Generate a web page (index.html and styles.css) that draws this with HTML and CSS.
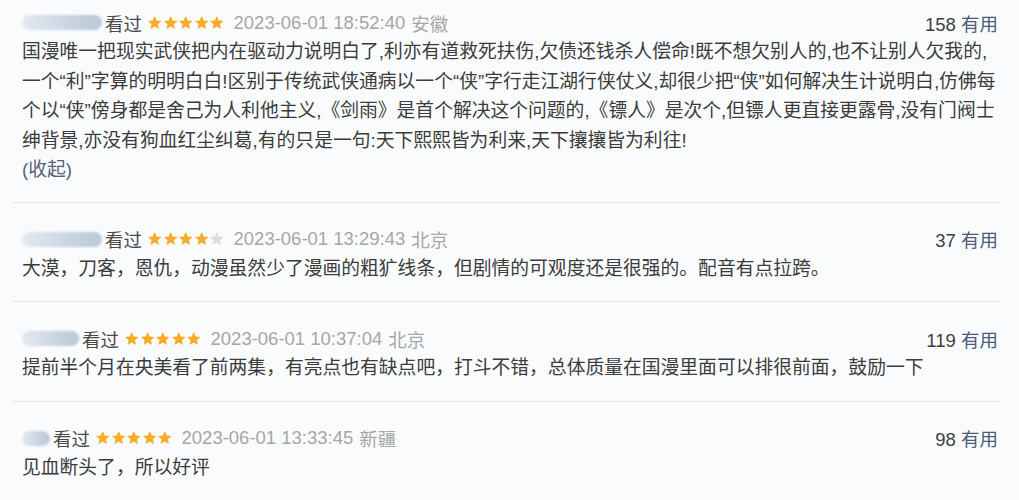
FILE: index.html
```html
<!DOCTYPE html>
<html lang="zh-CN">
<head>
<meta charset="utf-8">
<title>短评</title>
<link rel="stylesheet" href="styles.css">
</head>
<body>
<svg width="0" height="0" class="defs">
  <defs>
    <symbol id="star" viewBox="0 0 24 24">
      <path d="M12 1.6l3.1 6.9 7.4.7-5.6 5 1.7 7.3L12 17.7l-6.6 3.8 1.7-7.3-5.6-5 7.4-.7z"/>
    </symbol>
  </defs>
</svg>
<div class="comments">
  <div class="comment first">
    <div class="head">
      <div class="who">
        <span class="user u80"></span>
        <span class="status">看过</span>
        <span class="stars">
          <svg class="star on"><use href="#star"/></svg><svg class="star on"><use href="#star"/></svg><svg class="star on"><use href="#star"/></svg><svg class="star on"><use href="#star"/></svg><svg class="star on"><use href="#star"/></svg>
        </span>
        <span class="time">2023-06-01 18:52:40</span>
        <span class="loc">安徽</span>
      </div>
      <div class="votes"><span class="num">158</span> <span class="useful">有用</span></div>
    </div>
    <p class="text">国漫唯一把现实武侠把内在驱动力说明白了,利亦有道救死扶伤,欠债还钱杀人偿命!既不想欠别人的,也不让别人欠我的,<br>一个“利”字算的明明白白!区别于传统武侠通病以一个“侠”字行走江湖行侠仗义,却很少把“侠”如何解决生计说明白,仿佛每<br>个以“侠”傍身都是舍己为人利他主义,《剑雨》是首个解决这个问题的,《镖人》是次个,但镖人更直接更露骨,没有门阀士<br>绅背景,亦没有狗血红尘纠葛,有的只是一句:天下熙熙皆为利来,天下攘攘皆为利往!<br><span class="fold">(收起)</span></p>
  </div>

  <div class="comment">
    <div class="head">
      <div class="who">
        <span class="user u80"></span>
        <span class="status">看过</span>
        <span class="stars">
          <svg class="star on"><use href="#star"/></svg><svg class="star on"><use href="#star"/></svg><svg class="star on"><use href="#star"/></svg><svg class="star on"><use href="#star"/></svg><svg class="star off"><use href="#star"/></svg>
        </span>
        <span class="time">2023-06-01 13:29:43</span>
        <span class="loc">北京</span>
      </div>
      <div class="votes"><span class="num">37</span> <span class="useful">有用</span></div>
    </div>
    <p class="text">大漠，刀客，恩仇，动漫虽然少了漫画的粗犷线条，但剧情的可观度还是很强的。配音有点拉跨。</p>
  </div>

  <div class="comment">
    <div class="head">
      <div class="who">
        <span class="user u58"></span>
        <span class="status">看过</span>
        <span class="stars">
          <svg class="star on"><use href="#star"/></svg><svg class="star on"><use href="#star"/></svg><svg class="star on"><use href="#star"/></svg><svg class="star on"><use href="#star"/></svg><svg class="star on"><use href="#star"/></svg>
        </span>
        <span class="time">2023-06-01 10:37:04</span>
        <span class="loc">北京</span>
      </div>
      <div class="votes"><span class="num">119</span> <span class="useful">有用</span></div>
    </div>
    <p class="text">提前半个月在央美看了前两集，有亮点也有缺点吧，打斗不错，总体质量在国漫里面可以排很前面，鼓励一下</p>
  </div>

  <div class="comment last">
    <div class="head">
      <div class="who">
        <span class="user u28"></span>
        <span class="status">看过</span>
        <span class="stars">
          <svg class="star on"><use href="#star"/></svg><svg class="star on"><use href="#star"/></svg><svg class="star on"><use href="#star"/></svg><svg class="star on"><use href="#star"/></svg><svg class="star on"><use href="#star"/></svg>
        </span>
        <span class="time">2023-06-01 13:33:45</span>
        <span class="loc">新疆</span>
      </div>
      <div class="votes"><span class="num">98</span> <span class="useful">有用</span></div>
    </div>
    <p class="text">见血断头了，所以好评</p>
  </div>
</div>
</body>
</html>
```

FILE: styles.css
```css
html, body {
  margin: 0;
  padding: 0;
  background: #fafbfd;
}

body {
  font-family: "Liberation Sans", "Noto Sans CJK SC", sans-serif;
  color: #3b3b3b;
  overflow: hidden;
}

.defs {
  position: absolute;
  width: 0;
  height: 0;
}

.comments {
  width: 987px;
  margin-left: 13px;
}

.comment {
  padding: 22px 2px 18px 9px;
  border-bottom: 1px solid #e1e4e9;
}

.comment.first {
  padding-top: 8px;
  padding-bottom: 17px;
}

.comment.last {
  border-bottom: none;
}

.head {
  display: flex;
  justify-content: space-between;
  align-items: center;
  height: 29px;
  font-size: 18.5px;
}

.who {
  display: flex;
  align-items: center;
}

.user {
  display: block;
  height: 15px;
  border-radius: 8px;
  background: linear-gradient(90deg, #e4e9f0 0%, #d5dde8 35%, #c9d4e1 60%, #bac8d8 100%);
  filter: blur(1.2px);
  margin-right: 3px;
}

.u80 { width: 80px; }
.u58 { width: 57px; }
.u28 { width: 28px; }

.status {
  color: #4a4a4a;
}

.stars {
  display: flex;
  margin-left: 5px;
  margin-right: 9px;
}

.star {
  width: 15.5px;
  height: 15.5px;
}

.star.on { fill: #f8ab27; }
.star.off { fill: #dcdcdc; }

.time {
  color: #a6a6a6;
}

.loc {
  color: #a6a6a6;
  margin-left: 6px;
}

.votes {
  color: #3f3f3f;
}

.useful {
  color: #4b5b7c;
}

.text {
  margin: 0;
  font-size: 18.8px;
  line-height: 29.5px;
  white-space: nowrap;
}

.fold {
  color: #55617b;
}
```
